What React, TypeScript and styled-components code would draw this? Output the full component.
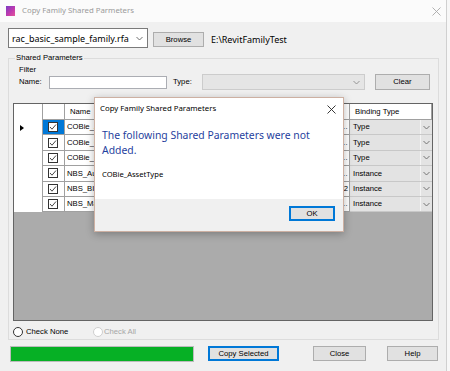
import React from "react";
import styled, { createGlobalStyle } from "styled-components";

const ui = `"Noto Sans", "Open Sans", sans-serif`;
const sys = `"Liberation Sans", Arial, sans-serif`;

const Global = createGlobalStyle`
  html, body { margin: 0; padding: 0; background: #f7f7f7; }
  body { width: 450px; height: 371px; overflow: hidden; font-family: ${sys}; }
  * { box-sizing: border-box; }
`;

const Window = styled.div`
  position: relative;
  width: 447px;
  height: 371px;
  background: #f0f0f0;
  border-right: 1px solid #d0d0d0;
  display: flex;
  flex-direction: column;
`;

const TitleBar = styled.div`
  height: 22px;
  flex-shrink: 0;
  background: #fbfbfb;
  display: flex;
  align-items: center;
  padding-left: 6px;
`;

const AppIcon = styled.div`
  width: 9px;
  height: 10px;
  background: linear-gradient(135deg, #7a3cc4 0%, #c03aae 55%, #e5559a 100%);
`;

const TitleText = styled.span<{ $active?: boolean }>`
  flex: 1;
  margin-left: 7px;
  font: 7.8px/1 ${ui};
  color: ${(p) => (p.$active ? "#000" : "#9a9a9a")};
  white-space: nowrap;
`;

const CloseX = ({ color, right }: { color: string; right: number }) => (
  <svg width="9" height="9" viewBox="0 0 9 9" style={{ marginRight: right }}>
    <path d="M0.5 0.5 L8.5 8.5 M8.5 0.5 L0.5 8.5" stroke={color} strokeWidth="0.9" fill="none" />
  </svg>
);

const Chevron = ({ color = "#606060" }: { color?: string }) => (
  <svg width="7" height="5" viewBox="0 0 7 5">
    <polyline points="0.5,1 3.5,4 6.5,1" stroke={color} strokeWidth="0.9" fill="none" />
  </svg>
);

const TopRow = styled.div`
  display: flex;
  align-items: flex-start;
  height: 20px;
  margin-top: 6px;
  padding-left: 8px;
`;

const FileCombo = styled.div`
  width: 140px;
  height: 20px;
  background: #fff;
  border: 1px solid #7a7a7a;
  display: flex;
  align-items: center;
  justify-content: space-between;
  padding: 0 4px 0 3px;
  font: 9px/1 ${ui};
  color: #000;
`;

const Button = styled.button<{ $w: number; $default?: boolean; $ml?: number; $mt?: number }>`
  width: ${(p) => p.$w}px;
  height: 15px;
  margin: ${(p) => p.$mt ?? 0}px 0 0 ${(p) => p.$ml ?? 0}px;
  padding: 0;
  background: #e1e1e1;
  border: 1px solid ${(p) => (p.$default ? "#0078d7" : "#adadad")};
  box-shadow: ${(p) => (p.$default ? "inset 0 0 0 1px #0078d7" : "none")};
  font: 7.7px/1 ${sys};
  color: #000;
  flex-shrink: 0;
`;

const PathText = styled.span`
  margin: 2px 0 0 7px;
  font: 9px/20px ${ui};
  color: #000;
`;

const Group = styled.fieldset`
  margin: 5px 0 0 8px;
  width: 431px;
  padding: 3px 5px 2px 4px;
  border: 1px solid #dcdcdc;
  min-width: 0;
`;

const Legend = styled.legend`
  margin-left: 2px;
  padding: 0 1px;
  font: 7.7px/10px ${sys};
  color: #000;
`;

const Label = styled.div<{ $w?: number; $ml?: number; $color?: string }>`
  font: 7.7px/8px ${sys};
  color: ${(p) => p.$color ?? "#000"};
  width: ${(p) => (p.$w ? `${p.$w}px` : "auto")};
  margin-left: ${(p) => p.$ml ?? 0}px;
  white-space: nowrap;
  flex-shrink: 0;
`;

const FilterRow = styled.div`
  display: flex;
  align-items: center;
  height: 16px;
  padding-left: 6px;
`;

const TextInput = styled.div`
  width: 118px;
  height: 13px;
  background: #fff;
  border: 1px solid #abadb3;
`;

const DisabledCombo = styled.div`
  width: 163px;
  height: 16px;
  background: #e5e5e5;
  border: 1px solid #cccccc;
  display: flex;
  align-items: center;
  justify-content: flex-end;
  padding-right: 4px;
`;

const Grid = styled.div`
  margin-top: 13px;
  width: 420px;
  height: 218px;
  background: #ababab;
  border: 1px solid #646464;
  display: grid;
  grid-template-columns: 29px 22px 150px 135px 82px;
  grid-template-rows: 16px;
  grid-auto-rows: 15.4px;
  align-content: start;
  overflow: hidden;
`;

const Cell = styled.div<{ $head?: boolean; $rowHead?: boolean; $sel?: boolean; $align?: string; $pl?: number }>`
  background: ${(p) => (p.$sel ? "#0078d7" : "#fff")};
  border-right: 1px solid #a0a0a0;
  border-bottom: ${(p) => (p.$rowHead ? "none" : "1px solid #a0a0a0")};
  font: 7.7px/1 ${sys};
  color: #000;
  display: flex;
  align-items: center;
  justify-content: ${(p) => p.$align ?? "flex-start"};
  padding: 0 1px 0 ${(p) => p.$pl ?? 2}px;
  white-space: nowrap;
  overflow: hidden;
`;

const ComboCell = styled.div`
  background: #e3e3e3;
  border-bottom: 1px solid #c8c8c8;
  display: flex;
  align-items: stretch;
  font: 7.7px/1 ${sys};
  color: #000;
`;

const ComboText = styled.div`
  flex: 1;
  display: flex;
  align-items: center;
  padding-left: 3px;
`;

const ComboBtn = styled.div`
  width: 12px;
  border-left: 1px solid #f4f4f4;
  display: flex;
  align-items: center;
  justify-content: center;
`;

const CheckBox = styled.div<{ $disabled?: boolean }>`
  width: 10px;
  height: 10px;
  background: #fff;
  border: 1px solid #333;
  display: flex;
  align-items: center;
  justify-content: center;
`;

const Tick = () => (
  <svg width="8" height="8" viewBox="0 0 8 8">
    <polyline points="1,4 3,6.2 7,1.5" stroke="#333" strokeWidth="0.9" fill="none" />
  </svg>
);

const RowArrow = () => (
  <svg width="4" height="6" viewBox="0 0 4 6">
    <polygon points="0,0 4,3 0,6" fill="#000" />
  </svg>
);

const RadioRow = styled.div`
  display: flex;
  align-items: center;
  height: 10px;
  margin-top: 6px;
`;

const RadioItem = styled.div<{ $w?: number }>`
  display: flex;
  align-items: center;
  width: ${(p) => (p.$w ? `${p.$w}px` : "auto")};
`;

const RadioCircle = styled.div<{ $disabled?: boolean }>`
  width: 10px;
  height: 10px;
  border-radius: 50%;
  background: #fff;
  border: 1px solid ${(p) => (p.$disabled ? "#cfcfcf" : "#333")};
`;

const BottomRow = styled.div`
  display: flex;
  align-items: flex-start;
  margin-top: 6px;
  padding-left: 10px;
`;

const Progress = styled.div`
  width: 184px;
  height: 16px;
  border: 1px solid #bcbcbc;
  background: #e6e6e6;
  padding: 0;
`;

const ProgressFill = styled.div`
  height: 100%;
  background: #06b025;
`;

const Dialog = styled.div`
  position: absolute;
  left: 94px;
  top: 97px;
  width: 250px;
  height: 135px;
  background: #fff;
  border: 1px solid #cdb0a2;
  box-shadow: 0 2px 8px rgba(0, 0, 0, 0.28);
  display: flex;
  flex-direction: column;
`;

const DialogTitle = styled.div`
  height: 22px;
  display: flex;
  align-items: center;
  padding-left: 5px;
  flex-shrink: 0;
`;

const DialogBody = styled.div`
  flex: 1;
  padding: 8px 7px 0 7px;
`;

const Instruction = styled.div`
  font: 10.4px/15px ${ui};
  color: #1f3f9e;
`;

const Detail = styled.div`
  margin-top: 11px;
  font: 7.6px/10px ${ui};
  color: #000;
`;

const DialogFooter = styled.div`
  height: 32px;
  background: #f0f0f0;
  display: flex;
  justify-content: flex-end;
  align-items: flex-start;
  padding: 7px 8px 0 0;
  flex-shrink: 0;
`;

type Row = { name: string; group: string; binding: string };
const rows: Row[] = [
  { name: "COBie_AssetType", group: "…", binding: "Type" },
  { name: "COBie_Category", group: "…", binding: "Type" },
  { name: "COBie_Description", group: "…", binding: "Type" },
  { name: "NBS_Author", group: "…", binding: "Instance" },
  { name: "NBS_BIMObjectVersion", group: "2", binding: "Instance" },
  { name: "NBS_Manufacturer", group: "…", binding: "Instance" },
];

export default function App() {
  return (
    <>
      <Global />
      <Window>
        <TitleBar>
          <AppIcon />
          <TitleText>Copy Family Shared Parmeters</TitleText>
          <CloseX color="#a8a8a8" right={5} />
        </TitleBar>

        <TopRow>
          <FileCombo>
            <span>rac_basic_sample_family.rfa</span>
            <Chevron />
          </FileCombo>
          <Button $w={51} $ml={5} $mt={4}>Browse</Button>
          <PathText>E:\RevitFamilyTest</PathText>
        </TopRow>

        <Group>
          <Legend>Shared Parameters</Legend>
          <Label $ml={6}>Filter</Label>
          <FilterRow>
            <Label $w={30}>Name:</Label>
            <TextInput />
            <Label $w={29} $ml={6}>Type:</Label>
            <DisabledCombo>
              <Chevron color="#8a8a8a" />
            </DisabledCombo>
            <Button $w={55} $ml={10} style={{ height: 16 }}>Clear</Button>
          </FilterRow>

          <Grid>
            <Cell $rowHead />
            <Cell />
            <Cell $pl={5}>Name</Cell>
            <Cell>Group</Cell>
            <Cell $pl={5}>Binding Type</Cell>
            {rows.map((r, i) => (
              <React.Fragment key={r.name}>
                <Cell $rowHead $pl={6}>{i === 0 ? <RowArrow /> : null}</Cell>
                <Cell $sel={i === 0} $align="center" $pl={0}>
                  <CheckBox>
                    <Tick />
                  </CheckBox>
                </Cell>
                <Cell>{r.name}</Cell>
                <Cell $align="flex-end">{r.group}</Cell>
                <ComboCell>
                  <ComboText>{r.binding}</ComboText>
                  <ComboBtn>
                    <Chevron color="#6a6a6a" />
                  </ComboBtn>
                </ComboCell>
              </React.Fragment>
            ))}
          </Grid>

          <RadioRow>
            <RadioItem $w={80}>
              <RadioCircle />
              <Label $ml={3}>Check None</Label>
            </RadioItem>
            <RadioItem>
              <RadioCircle $disabled />
              <Label $ml={1} $color="#a6a6a6">Check All</Label>
            </RadioItem>
          </RadioRow>
        </Group>

        <BottomRow>
          <Progress>
            <ProgressFill style={{ width: "100%" }} />
          </Progress>
          <Button $w={71} $ml={14} $default>Copy Selected</Button>
          <Button $w={53} $ml={34}>Close</Button>
          <Button $w={51} $ml={21}>Help</Button>
        </BottomRow>

        <Dialog>
          <DialogTitle>
            <TitleText $active style={{ marginLeft: 0 }}>Copy Family Shared Parameters</TitleText>
            <CloseX color="#222" right={7} />
          </DialogTitle>
          <DialogBody>
            <Instruction>The following Shared Parameters were not Added.</Instruction>
            <Detail>COBie_AssetType</Detail>
          </DialogBody>
          <DialogFooter>
            <Button $w={46} $default>OK</Button>
          </DialogFooter>
        </Dialog>
      </Window>
    </>
  );
}
